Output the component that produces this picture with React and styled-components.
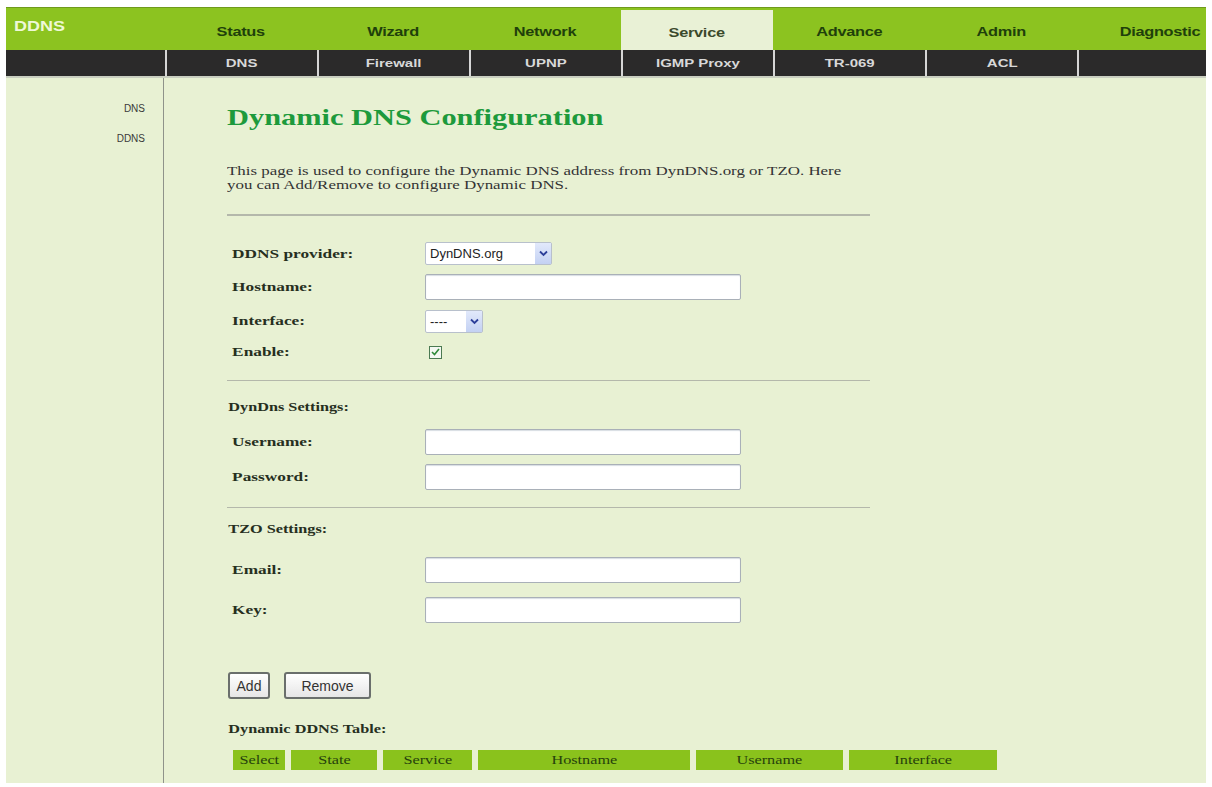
import React from 'react'
import styled, { createGlobalStyle, css } from 'styled-components'

const GlobalStyle = createGlobalStyle`
  html, body {
    margin: 0;
    padding: 0;
    background: #ffffff;
  }
  body {
    font-family: "Liberation Serif", "Times New Roman", serif;
  }
`

// the old router pages render their text noticeably wide
const wide = css`
  transform: scaleX(${p => p.$sx || 1.3});
  transform-origin: ${p => p.$origin || 'left center'};
`

const Frame = styled.div`
  margin: 7px 0 0 6px;
  width: 1200px;
  height: 776px;
  display: flex;
  flex-direction: column;
  background: #e8f1d3;
  overflow: hidden;
`

const TopBar = styled.div`
  height: 43px;
  display: grid;
  grid-template-columns: 159px repeat(6, 152px) 129px;
  background: #8cc320;
  border-top: 1px solid #6f9a1c;
  box-sizing: border-box;
`

const Logo = styled.div`
  display: flex;
  align-items: center;
  padding-left: 8px;
  padding-bottom: 8px;
  font-family: "Liberation Sans", Arial, sans-serif;
  font-weight: bold;
  font-size: 15px;
  color: #eef8d6;
`

const LogoText = styled.span`
  display: inline-block;
  ${wide}
`

const Tab = styled.div`
  display: flex;
  align-items: center;
  justify-content: ${p => (p.$edge ? 'flex-end' : 'center')};
  padding-top: 5px;
  padding-right: ${p => (p.$edge ? '6px' : '0')};
  margin-top: ${p => (p.$active ? '2px' : '0')};
  font-family: "Liberation Sans", Arial, sans-serif;
  font-weight: bold;
  font-size: 12px;
  letter-spacing: -0.2px;
  color: ${p => (p.$active ? '#3b4a2c' : '#1f400b')};
  background: ${p => (p.$active ? '#e9f1d6' : 'transparent')};
`

const TabText = styled.span`
  display: inline-block;
  ${wide}
`

const SubBar = styled.div`
  height: 28px;
  display: grid;
  grid-template-columns: 159px repeat(6, 152px) 129px;
  background: #2b2a2a;
  border-bottom: 2px solid #c9cfc0;
  box-sizing: border-box;
`

const SubItem = styled.div`
  display: flex;
  align-items: center;
  justify-content: center;
  border-left: ${p => (p.$first ? 'none' : '2px solid #d6d6d6')};
  font-family: "Liberation Sans", Arial, sans-serif;
  font-weight: bold;
  font-size: 10px;
  color: #d8d8d8;
`

const SubText = styled.span`
  display: inline-block;
  ${wide}
`

const Body = styled.div`
  flex: 1;
  display: flex;
`

const Sidebar = styled.div`
  width: 158px;
  border-right: 1px solid #8f938a;
  display: flex;
  flex-direction: column;
  align-items: flex-end;
  padding: 25px 18px 0 0;
  box-sizing: border-box;
  gap: 19px;
`

const SideLink = styled.div`
  font-family: "Liberation Sans", Arial, sans-serif;
  font-size: 10px;
  color: #3a3a3a;
`

const Main = styled.div`
  flex: 1;
  padding: 24px 0 0 63px;
`

const Title = styled.h1`
  margin: 0;
  height: 31px;
  line-height: 31px;
  white-space: nowrap;
  font-family: "Liberation Serif", "Times New Roman", serif;
  font-weight: bold;
  font-size: 24px;
  color: #1d9a3c;
  ${wide}
`

const Intro = styled.p`
  margin: 31px 0 0 0;
  white-space: nowrap;
  font-size: 13px;
  line-height: 14px;
  color: #333;
  ${wide}
`

const Rule = styled.div`
  width: 643px;
  height: 0;
  border-top: ${p => (p.$thick ? '2px' : '1px')} solid #b4b8ab;
  margin: ${p => p.$m || '0'};
`

const Row = styled.div`
  height: ${p => p.$h}px;
  display: flex;
  align-items: center;
`

const Label = styled.div`
  width: 198px;
  flex: none;
  padding-left: 4px;
  box-sizing: border-box;
  white-space: nowrap;
  font-weight: bold;
  font-size: 13.5px;
  color: #262f1e;
  ${wide}
`

const SectionTitle = styled.div`
  height: ${p => p.$h}px;
  display: flex;
  align-items: center;
  padding-left: 1px;
  white-space: nowrap;
  font-weight: bold;
  font-size: 12.5px;
  color: #262f1e;
  ${wide}
`

const TextInput = styled.div`
  width: 316px;
  height: 26px;
  box-sizing: border-box;
  background: #fff;
  border: 1px solid #a9b0b8;
  border-radius: 2px;
  box-shadow: inset 0 1px 1px #d8dde3;
`

const Select = styled.div`
  width: ${p => p.$w}px;
  height: 23px;
  box-sizing: border-box;
  display: flex;
  align-items: stretch;
  background: #fff;
  border: 1px solid #b8c0cc;
  border-radius: 2px;
`

const SelectText = styled.div`
  flex: 1;
  display: flex;
  align-items: center;
  padding-left: 4px;
  font-family: "Liberation Sans", Arial, sans-serif;
  font-size: 13px;
  color: #222;
`

const Arrow = styled.div`
  width: 16px;
  display: flex;
  align-items: center;
  justify-content: center;
  background: linear-gradient(#e2e9fb, #c3d1f3);
`

const Check = styled.div`
  width: 13px;
  height: 13px;
  margin-left: 4px;
  box-sizing: border-box;
  border: 1px solid #4b7a52;
  background: #f4f8f2;
  display: flex;
  align-items: center;
  justify-content: center;
`

const Buttons = styled.div`
  display: flex;
  gap: 14px;
  margin: 42px 0 10px 1px;
`

const Button = styled.button`
  width: ${p => p.$w}px;
  height: 27px;
  padding: 0;
  font-family: "Liberation Sans", Arial, sans-serif;
  font-size: 14px;
  color: #333;
  background: linear-gradient(#ffffff, #e6e6e6);
  border: 2px solid #6a6f6c;
  border-radius: 3px;
`

const Table = styled.div`
  display: flex;
  gap: 6px;
  margin-left: 6px;
`

const HeadCell = styled.div`
  width: ${p => p.$w}px;
  height: 20px;
  display: flex;
  align-items: center;
  justify-content: center;
  background: #8ac21c;
`

const HeadText = styled.span`
  display: inline-block;
  font-size: 12.5px;
  color: #26410c;
  transform: scaleX(1.3);
`

const Chevron = () => (
  <svg width="9" height="7" viewBox="0 0 9 7">
    <path d="M1 1.5 L4.5 5 L8 1.5" fill="none" stroke="#2d3f9a" strokeWidth="1.8" />
  </svg>
)

const tabs = ['Status', 'Wizard', 'Network', 'Service', 'Advance', 'Admin', 'Diagnostic']
const subs = ['DNS', 'Firewall', 'UPNP', 'IGMP Proxy', 'TR-069', 'ACL', '']
const columns = [
  ['Select', 52],
  ['State', 86],
  ['Service', 89],
  ['Hostname', 212],
  ['Username', 147],
  ['Interface', 148],
]

const App = () => (
  <>
    <GlobalStyle />
    <Frame>
      <TopBar>
        <Logo>
          <LogoText $sx={1.2}>DDNS</LogoText>
        </Logo>
        {tabs.map((t, i) => {
          const edge = i === tabs.length - 1
          return (
            <Tab key={t} $active={t === 'Service'} $edge={edge}>
              <TabText $sx={1.36} $origin={edge ? 'right center' : 'center'}>{t}</TabText>
            </Tab>
          )
        })}
      </TopBar>
      <SubBar>
        <SubItem $first />
        {subs.map((s, i) => (
          <SubItem key={i}>
            <SubText $sx={1.5} $origin="center">{s}</SubText>
          </SubItem>
        ))}
      </SubBar>
      <Body>
        <Sidebar>
          <SideLink>DNS</SideLink>
          <SideLink>DDNS</SideLink>
        </Sidebar>
        <Main>
          <Title $sx={1.266}>Dynamic DNS Configuration</Title>
          <Intro $sx={1.3}>
            This page is used to configure the Dynamic DNS address from DynDNS.org or TZO. Here
            <br />
            you can Add/Remove to configure Dynamic DNS.
          </Intro>
          <Rule $thick $m="22px 0 21px 0" />
          <Row $h={33}>
            <Label $sx={1.28}>DDNS provider:</Label>
            <Select $w={127}>
              <SelectText>DynDNS.org</SelectText>
              <Arrow><Chevron /></Arrow>
            </Select>
          </Row>
          <Row $h={34}>
            <Label $sx={1.28}>Hostname:</Label>
            <TextInput />
          </Row>
          <Row $h={34}>
            <Label $sx={1.28}>Interface:</Label>
            <Select $w={58}>
              <SelectText>----</SelectText>
              <Arrow><Chevron /></Arrow>
            </Select>
          </Row>
          <Row $h={28}>
            <Label $sx={1.28}>Enable:</Label>
            <Check>
              <svg width="9" height="8" viewBox="0 0 9 8">
                <path d="M1 4 L3.5 6.5 L8 1" fill="none" stroke="#2f8a3a" strokeWidth="1.6" />
              </svg>
            </Check>
          </Row>
          <Rule $m="14px 0 9px 0" />
          <SectionTitle $h={34}>DynDns Settings:</SectionTitle>
          <Row $h={35}>
            <Label $sx={1.28}>Username:</Label>
            <TextInput />
          </Row>
          <Row $h={35}>
            <Label $sx={1.28}>Password:</Label>
            <TextInput />
          </Row>
          <Rule $m="13px 0 0 0" />
          <SectionTitle $h={42}>TZO Settings:</SectionTitle>
          <Row $h={40}>
            <Label $sx={1.28}>Email:</Label>
            <TextInput />
          </Row>
          <Row $h={40}>
            <Label $sx={1.28}>Key:</Label>
            <TextInput />
          </Row>
          <Buttons>
            <Button $w={42}>Add</Button>
            <Button $w={87}>Remove</Button>
          </Buttons>
          <SectionTitle $h={41}>Dynamic DDNS Table:</SectionTitle>
          <Table>
            {columns.map(([name, w]) => (
              <HeadCell key={name} $w={w}>
                <HeadText>{name}</HeadText>
              </HeadCell>
            ))}
          </Table>
        </Main>
      </Body>
    </Frame>
  </>
)

export default App
